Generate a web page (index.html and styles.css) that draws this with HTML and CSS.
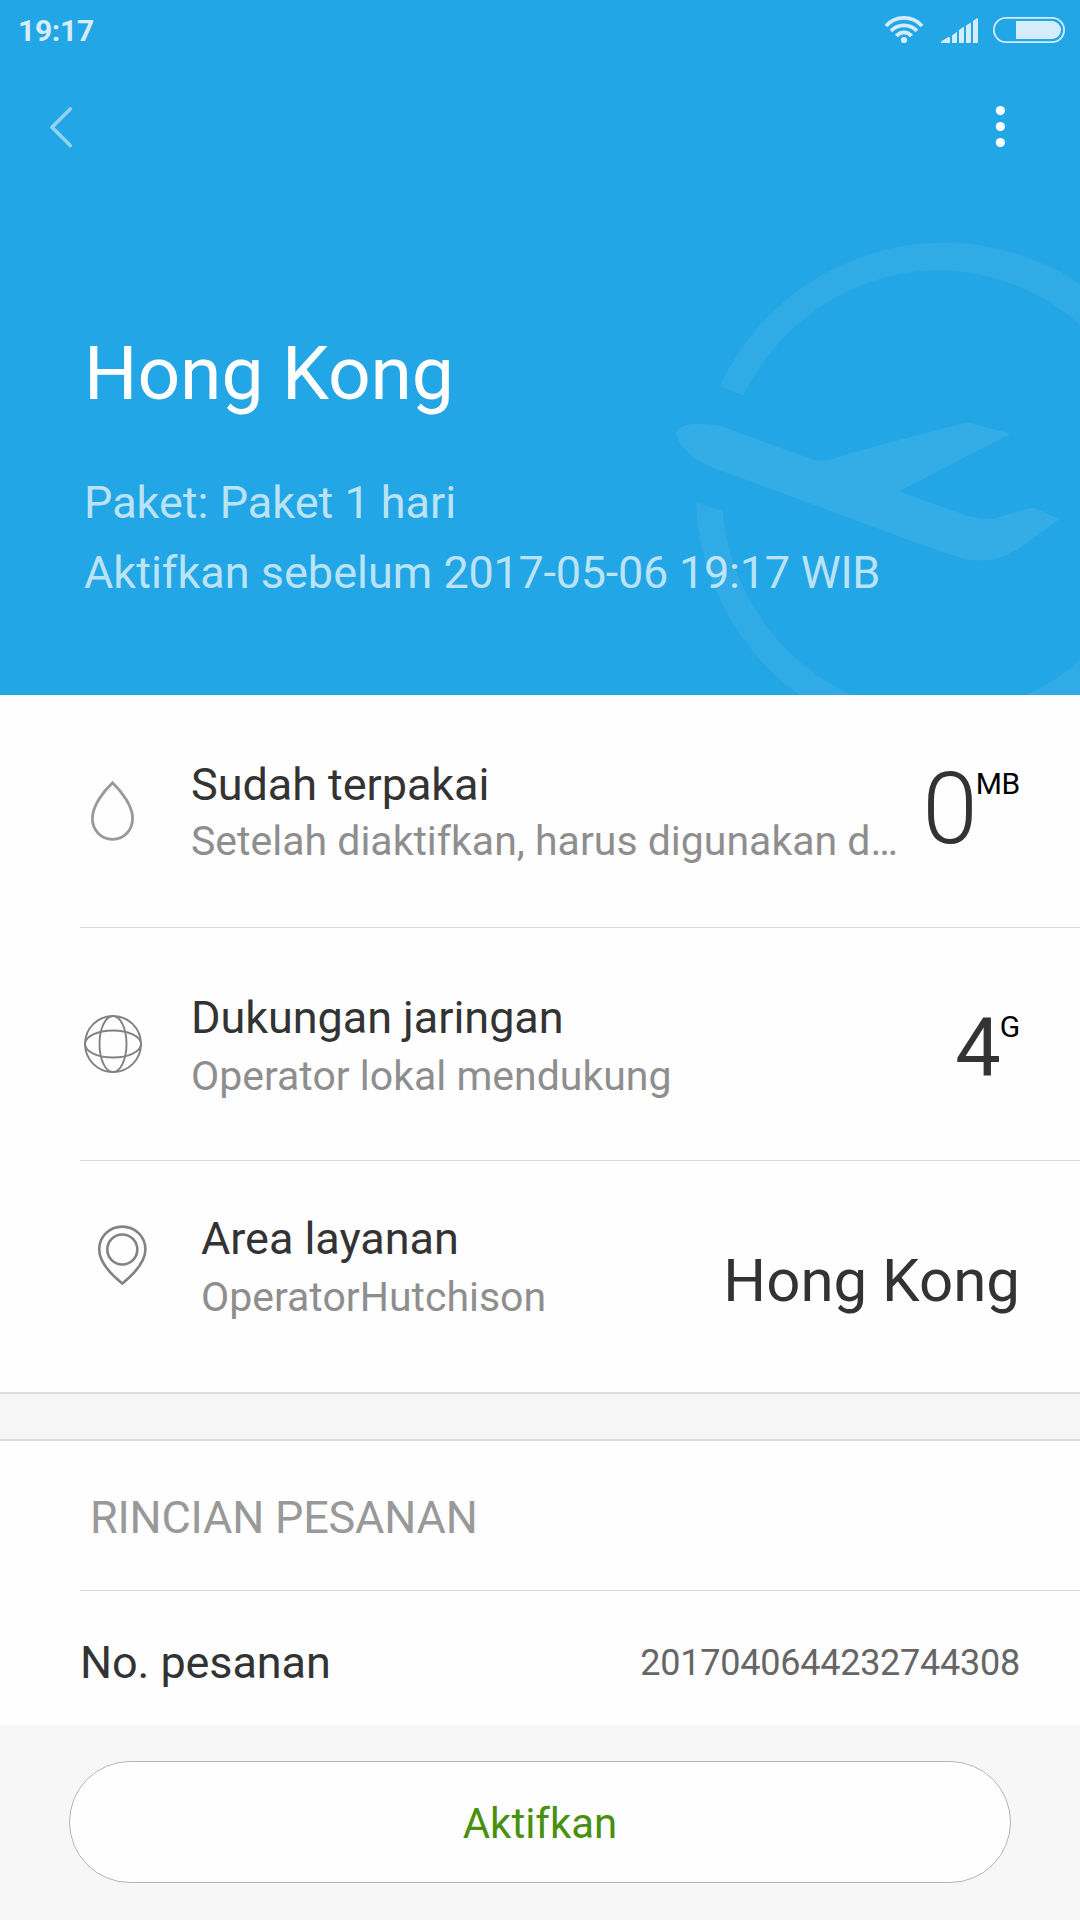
FILE: index.html
```html
<!DOCTYPE html>
<html lang="id">

<head>
  <meta charset="UTF-8">
  <meta name="viewport" content="width=device-width, initial-scale=1.0">
  <title>Hong Kong</title>
  <link rel="stylesheet" href="styles.css">
</head>

<body>

  <!-- Header -->
  <header class="hero">
    <svg class="hero-art" viewBox="0 0 440 475">
      <path fill-opacity=".065"
        d="M80 166A247.5 249.5 0 0 1 303.4 22.600A247.5 249.5 0 0 1 303.4 521.600A247.5 249.5 0 0 1 56.200 282.500L82.700 291A220.500 222.500 0 0 0 303.4 494.700A220.500 222.500 0 0 0 303.4 50A220.500 222.500 0 0 0 103.500 175.500Z" />
      <path fill-opacity=".08"
        d="M36.3 213C37 207 47 203.7 60 203.7C74 203.7 88 208 100 213L173 239.5Q183 243 205 235Q215 231.500 305 208L322 203.500Q327 202 333 204L370.500 213.500L259 271.500L325 295Q347 302 360 297Q366 294 394 287.500L419.500 299L378 329Q354 345 325 339Q300 332 245 311L70 246.500C50 238 36.500 222 36.300 213Z" />
    </svg>

    <div class="statusbar">
      <span class="time">19:17</span>
      <svg class="signals" width="111" height="32" viewBox="22 14 111 32">
        <g fill="none" stroke="currentColor" stroke-width="3.8">
          <path d="M26 26.100A24 24 0 0 1 62 26.100" />
          <path d="M31 31A17.700 17.700 0 0 1 57 31" />
          <path d="M36.500 36A9.600 9.600 0 0 1 51.500 36" />
        </g>
        <circle cx="44" cy="40" r="3.1" />
        <path d="M81 43V41.500L88 37.300Q90 36.500 90 38V43ZM92 43V35.500L97 31.800V42Q97 43 96 43ZM99 43V30L104 26.500V42Q104 43 103 43ZM106 43V25.500L111 22.500V42Q111 43 110 43ZM113 43V21L117 18.200Q118 17.500 118 19V42Q118 43 117 43Z" />
      </svg>
      <svg width="72" height="26" viewBox="0 0 72 26">
        <rect x=".9" y=".9" width="70.2" height="24.2" rx="12.100" fill="none" stroke="currentColor" stroke-width="1.800" />
        <path d="M23 4H59A9 9 0 0 1 59 22H23Z" />
      </svg>
    </div>

    <nav class="navbar">
      <svg class="back" width="24" height="42" viewBox="0 0 24 42">
        <path d="M21.300 3L3 21.200L21.300 39.500" />
      </svg>
      <svg class="more" width="10" height="42" viewBox="0 0 10 42">
        <circle cx="5.400" cy="4.600" r="4.600" />
        <circle cx="5.400" cy="20.500" r="4.600" />
        <circle cx="5.400" cy="36.500" r="4.600" />
      </svg>
    </nav>

    <div class="hero-text">
      <h1>Hong Kong</h1>
      <p>Paket: Paket 1 hari</p>
      <p>Aktifkan sebelum <span class="date">2017-05-06 19:17 WIB</span></p>
    </div>
  </header>

  <!-- Package info -->
  <section class="info">
    <div class="row">
      <svg class="icon drop" viewBox="0 0 66 66">
        <path d="M32.500 4.800C24 13 12.400 27.500 12.400 40.500C12.400 52 21 61.300 32.500 61.300S52.600 52 52.600 40.500C52.600 27.500 41 13 32.500 4.800Z" />
      </svg>
      <div class="label">
        <h2>Sudah terpakai</h2>
        <p>Setelah diaktifkan, harus digunakan d…</p>
      </div>
      <div class="value">
        <span class="amount">0</span>
        <span class="unit">MB</span>
      </div>
    </div>

    <div class="row network">
      <svg class="icon" viewBox="0 0 66 66">
        <circle cx="33" cy="33" r="28" />
        <ellipse cx="33" cy="33" rx="13.500" ry="28" />
        <ellipse cx="33" cy="33" rx="28" ry="13.500" />
      </svg>
      <div class="label">
        <h2>Dukungan jaringan</h2>
        <p>Operator lokal mendukung</p>
      </div>
      <div class="value">
        <span class="speed">4</span>
        <span class="unit">G</span>
      </div>
    </div>

    <div class="row area">
      <svg class="icon pin" viewBox="0 0 66 66">
        <path d="M32.300 61.500C23 54 9.200 41 9.200 27.500C9.200 14.500 19.500 4.600 32.300 4.600S55.400 14.500 55.400 27.500C55.400 41 41.500 54 32.300 61.500Z" />
        <circle cx="32.300" cy="27.500" r="15" />
      </svg>
      <div class="label">
        <h2>Area layanan</h2>
        <p>OperatorHutchison</p>
      </div>
      <div class="value">
        <span class="place">Hong Kong</span>
      </div>
    </div>
  </section>

  <!-- Order details -->
  <section class="order">
    <h3>RINCIAN PESANAN</h3>
    <div class="order-row">
      <span class="order-name">No. pesanan</span>
      <span class="order-number">2017040644232744308</span>
    </div>
  </section>

  <footer>
    <button type="button">Aktifkan</button>
  </footer>

</body>

</html>
```

FILE: styles.css
```css
* {
  box-sizing: border-box;
}

body {
  margin: 0;
  width: 1080px;
  height: 1920px;
  overflow: hidden;
  display: flex;
  flex-direction: column;
  background-color: #f6f6f6;
  color: #333;
  font-family: Roboto, sans-serif;
}

h1,
h2,
h3,
p {
  margin: 0;
  font-weight: 400;
}

svg {
  display: block;
  flex: none;
}

/* Header */
.hero {
  position: relative;
  height: 695px;
  background-color: #23a6e5;
  color: white;
}

.hero-art {
  position: absolute;
  right: 0;
  bottom: 0;
  width: 440px;
  height: 475px;
  fill: white;
}

.statusbar {
  display: flex;
  align-items: center;
  height: 60px;
  padding: 0 15px 0 18px;
  color: #d5edfa;
  fill: currentColor;
}

.time {
  flex: 1;
  font-size: 30px;
  font-weight: 700;
  letter-spacing: -0.3px;
}

.navbar {
  display: flex;
  justify-content: space-between;
  align-items: center;
  height: 134px;
  padding: 0 75px 0 49px;
}

.back {
  fill: none;
  stroke: white;
  stroke-width: 3.7;
  stroke-linecap: round;
  stroke-linejoin: round;
  opacity: 0.5;
}

.more {
  fill: white;
}

.hero-text {
  position: relative;
  padding: 134px 0 0 84px;
}

.hero-text h1 {
  margin-bottom: 50px;
  font-size: 75px;
  line-height: 90px;
  letter-spacing: -0.1px;
}

.hero-text p {
  font-size: 45px;
  line-height: 70px;
  color: rgba(255, 255, 255, 0.7);
}

.date {
  letter-spacing: -0.25px;
}

/* Package info */
.info {
  height: 699px;
  background-color: #fefefe;
  border-bottom: 2px solid #dcdcdc;
}

.row {
  display: flex;
  align-items: flex-start;
  height: 233px;
  margin-left: 80px;
  padding: 63px 60px 0 0;
  border-bottom: 1px solid #d8d8d8;
}

.row.area {
  height: 231px;
  padding-top: 51px;
  padding-left: 10px;
  border-bottom: none;
}

.icon {
  width: 66px;
  height: 66px;
  margin: 20px 45px 0 0;
  fill: none;
  stroke: #828282;
  stroke-width: 1.9;
}

.icon.drop {
  stroke: #999;
  stroke-width: 2.8;
}

.icon.pin {
  margin-top: 10px;
  stroke-width: 2.6;
}

.label {
  flex: 1;
  white-space: nowrap;
}

.label h2 {
  font-size: 45px;
  line-height: 54px;
  letter-spacing: -0.05px;
}

.label p {
  margin-top: 6px;
  font-size: 41px;
  line-height: 50px;
  color: #8e8e8e;
}

.drop + .label p {
  margin-top: 4px;
}

.value {
  display: flex;
  align-items: flex-start;
}

.amount {
  margin-top: 1px;
  margin-right: -2px;
  font-size: 100px;
  font-weight: 300;
  line-height: 100px;
}

.unit {
  margin-top: 11px;
  font-size: 30px;
  line-height: 30px;
  letter-spacing: -0.3px;
  color: black;
}

.network .unit {
  margin-top: 21px;
}

.speed {
  margin-top: 18px;
  margin-right: -1px;
  font-size: 81px;
  line-height: 80px;
}

.place {
  margin-top: 39px;
  font-size: 60px;
  line-height: 60px;
}

/* Order details */
.order {
  height: 286px;
  margin-top: 45px;
  padding-left: 80px;
  background-color: #fefefe;
  border-top: 2px solid #dcdcdc;
}

.order h3 {
  height: 150px;
  padding-left: 10px;
  border-bottom: 1px solid #d8d8d8;
  font-size: 45px;
  line-height: 154px;
  letter-spacing: -0.2px;
  color: #999;
}

.order-row {
  display: flex;
  justify-content: space-between;
  align-items: center;
  padding-right: 60px;
  line-height: 144px;
}

.order-name {
  font-size: 45px;
  letter-spacing: -0.1px;
}

.order-number {
  font-size: 36px;
  letter-spacing: -0.25px;
  color: #666;
}

/* Bottom button */
footer {
  flex: 1;
  padding: 36px 69px 0;
  background-color: #f7f7f7;
}

button {
  display: block;
  width: 942px;
  height: 122px;
  padding: 2px 0 0;
  border: 1px solid #b4b4b4;
  border-radius: 61px;
  background-color: #fefefe;
  color: #4a9010;
  font-family: inherit;
  font-size: 42px;
}
```
